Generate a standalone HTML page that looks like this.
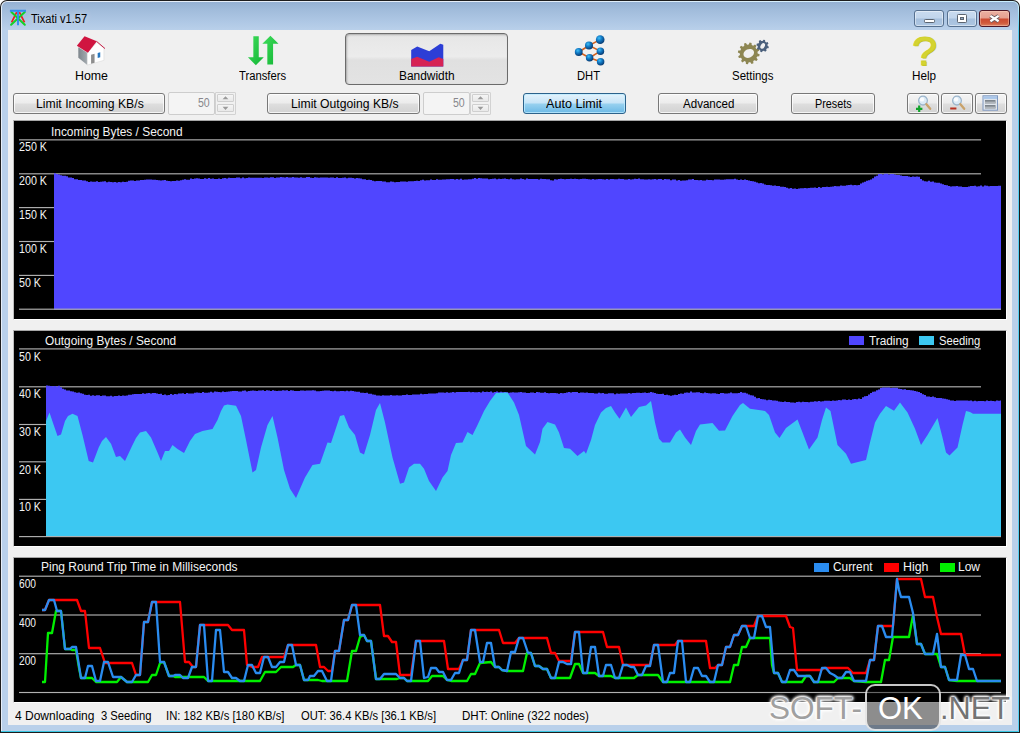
<!DOCTYPE html>
<html lang="en"><head><meta charset="utf-8"><title>Tixati v1.57</title>
<style>
html,body{margin:0;padding:0;background:#fff;}
body{width:1020px;height:733px;overflow:hidden;position:relative;font-family:"Liberation Sans",sans-serif;font-size:12px;line-height:14px;color:#000;}
div,span,svg{position:absolute;box-sizing:border-box;}
.t{white-space:nowrap;line-height:14px;height:14px;transform-origin:0 0;display:block;}
#win{left:0;top:0;width:1020px;height:733px;background:#1d1d1d;border-radius:7px 7px 0 0;overflow:hidden;}
#hi{left:1px;top:1px;width:1018px;height:731px;background:linear-gradient(90deg,#e6eef8 0,#e6eef8 50%,#c9efff 100%);border-radius:6px 6px 0 0;}
#glass{left:2px;top:2px;width:1016px;height:729px;border-radius:5px 5px 0 0;background:linear-gradient(180deg,#95b1d3 0,#a1bcdb 8px,#afc8e5 20px,#b9d0ea 28px,#b9d0ea 100%);}
#rline{left:1018px;top:6px;width:1px;height:726px;background:linear-gradient(180deg,rgba(84,208,242,0) 0,#56d0f2 24px,#56d0f2 100%);}
#botline{left:1px;top:731px;width:1018px;height:1px;background:#38c6e2;}
#client{left:8px;top:30px;width:1004px;height:695px;background:#f0f0f0;}
.cap{top:10px;height:17px;border:1px solid #56708f;border-radius:3px;background:linear-gradient(180deg,#c9dbef 0,#c1d5ec 48%,#a6c0dd 52%,#adc6e2 100%);box-shadow:inset 0 0 0 1px rgba(255,255,255,.45);}
#bclose{border-color:#4d1626;background:linear-gradient(180deg,#ebb0a2 0,#e59f8f 48%,#cc4a31 52%,#d05a3c 80%,#dd8263 100%);box-shadow:inset 0 0 0 1px rgba(255,220,200,.4);}
.btn{height:21px;top:93px;border:1px solid #787878;border-radius:3px;background:linear-gradient(180deg,#f4f4f4 0,#ececec 48%,#dedede 52%,#d2d2d2 100%);box-shadow:inset 0 0 0 1px rgba(255,255,255,.75);}
.btn.hot{border-color:#2c628b;background:linear-gradient(180deg,#e4f3fc 0,#c6e4f7 48%,#98d1ef 52%,#6bb9e6 100%);box-shadow:inset 0 0 0 1px rgba(190,235,255,.8);}
.edit{top:92px;height:23px;width:47px;border:1px solid #cdcdcd;background:#f4f4f4;border-radius:2px;}
.spinf{top:92px;height:23px;width:21px;border:1px solid #d2d2d2;background:#f1f1f1;border-radius:1px;}
.spin{width:17px;height:8px;border:1px solid #cfcfcf;border-radius:1px;background:linear-gradient(180deg,#f5f5f5,#e9e9e9);}
.panel{left:13px;width:994px;background:#000;border-top:1px solid #a6a6a6;border-left:1px solid #bcbcbc;border-right:1px solid #fff;border-bottom:1px solid #fff;}
#tabsel{left:345px;top:33px;width:163px;height:52px;border:1px solid #6b6b6b;border-radius:4px;background:linear-gradient(180deg,#e6e6e6 0,#ececec 45%,#e0e0e0 52%,#e3e3e3 100%);box-shadow:inset 1px 1px 2px rgba(0,0,0,.25);}
.sw{width:15px;height:9px;}
.wm{font-family:"Liberation Sans",sans-serif;font-size:31px;line-height:31px;white-space:nowrap;color:#a0a0a0;text-shadow:0 0 2px #fff,0 0 2px #fff,0 0 3px #fff,0 0 3px #fff,0 0 4px #fff,0 0 4px rgba(255,255,255,.9);transform-origin:0 0;}
</style></head>
<body>
<div id="win"><div id="hi"></div><div id="glass"></div><div id="botline"></div><div id="rline"></div>
<svg id="appicon" style="left:9px;top:9px" width="19" height="18" viewBox="0 0 19 18"><path d="M7.7 3.2 L2.6 13.4 M10.4 3.2 L15.5 13.4" stroke="#ee1c1c" stroke-width="1.7" fill="none"/><path d="M2.4 3 L15.8 15.8 M15.8 3 L2.1 15.8" stroke="#14d028" stroke-width="2" fill="none" stroke-linecap="round"/><path d="M0.9 1.8 H17 M9 2 V16.3" stroke="#2f8cf0" stroke-width="1.9" fill="none"/></svg>
<span class="t" style="left:31.00px;top:12px;font-size:12px;color:#000;transform:scaleX(0.920);text-shadow:0 0 7px rgba(255,255,255,.55),0 0 10px rgba(255,255,255,.4);">Tixati v1.57</span>
<div class="cap" style="left:914px;width:30px"><svg style="left:0;top:0" width="28" height="15" viewBox="0 0 28 15"><rect x="9.5" y="8.5" width="10" height="3" rx="0.8" fill="#fff" stroke="#5b6470" stroke-width="1"/></svg></div>
<div class="cap" style="left:947px;width:30px"><svg style="left:0;top:0" width="28" height="15" viewBox="0 0 28 15"><rect x="9.5" y="3.5" width="9" height="8" rx="0.8" fill="#fff" stroke="#5b6470" stroke-width="1"/><rect x="12.5" y="6.5" width="3" height="2" fill="#8fa6c2" stroke="#5b6470" stroke-width="1"/></svg></div>
<div class="cap" id="bclose" style="left:979px;width:31px"><svg style="left:0;top:0" width="29" height="15" viewBox="0 0 29 15"><path d="M10.4 4.9 L18.6 10.3 M18.6 4.9 L10.4 10.3" stroke="#6a5a5e" stroke-width="4" fill="none"/><path d="M10.4 4.9 L18.6 10.3 M18.6 4.9 L10.4 10.3" stroke="#fff" stroke-width="2.3" fill="none"/></svg></div>
<div id="client"></div>
<div id="tabsel"></div>
<svg id="tabicons" style="left:0;top:0" width="1020" height="90" viewBox="0 0 1020 90"><defs><radialGradient id="ball" cx="0.38" cy="0.32" r="0.7"><stop offset="0" stop-color="#3fc0f8"/><stop offset="0.45" stop-color="#1279c4"/><stop offset="1" stop-color="#06386f"/></radialGradient><linearGradient id="garrow" x1="0" y1="0" x2="1" y2="1"><stop offset="0" stop-color="#3fdd5c"/><stop offset="1" stop-color="#12b534"/></linearGradient><linearGradient id="wall" x1="0" y1="0" x2="1" y2="0"><stop offset="0" stop-color="#7e868c"/><stop offset="1" stop-color="#a4abb0"/></linearGradient></defs><polygon points="78.33,47.17 87.33,52.83 87.33,65.08 78.33,57.83" fill="url(#wall)" /><polygon points="87.33,52.83 96.83,42.33 103.92,48.42 103.92,60.33 87.33,65.08" fill="#ffffff" stroke="#dcdcdc" stroke-width="0.6"/><polygon points="76.83,45.67 84.58,36.17 96.83,41.17 87.92,52.67" fill="#d01540" /><path d="M96.50 41.33 L105.00 48.58" stroke="#c82048" stroke-width="1" fill="none"/><polygon points="91.08,54.83 94.58,53.83 94.58,62.67 91.08,63.83" fill="#8e8e8e" /><polygon points="97.67,53.00 100.25,52.25 100.25,57.33 97.67,58.08" fill="#2878c0" /><polygon points="253.33,36.17 258.75,36.17 258.75,57.17 263.75,57.17 255.83,65.17 247.92,57.17 253.33,57.17" fill="url(#garrow)" /><polygon points="270.42,35.83 278.50,43.83 273.08,43.83 273.08,64.50 267.33,64.50 267.33,43.83 262.33,43.83" fill="url(#garrow)" /><polygon points="411.20,49.96 417.21,46.53 429.22,51.33 440.37,43.78 443.28,44.64 443.28,66.60 411.20,66.60" fill="#2c3ed6" /><polygon points="411.20,59.05 417.21,56.65 429.22,61.63 438.65,57.34 443.28,59.05 443.28,66.60 411.20,66.60" fill="#d62254" /><line x1="578.75" y1="52.00" x2="589.00" y2="45.50" stroke="#d2601e" stroke-width="1.5"/><line x1="589.00" y1="45.50" x2="600.17" y2="39.67" stroke="#d2601e" stroke-width="1.5"/><line x1="589.00" y1="45.50" x2="600.42" y2="51.17" stroke="#d2601e" stroke-width="1.5"/><line x1="578.75" y1="52.00" x2="589.58" y2="57.75" stroke="#d2601e" stroke-width="1.5"/><line x1="589.58" y1="57.75" x2="600.42" y2="51.17" stroke="#d2601e" stroke-width="1.5"/><line x1="589.58" y1="57.75" x2="600.58" y2="61.75" stroke="#d2601e" stroke-width="1.5"/><circle cx="578.75" cy="52.00" r="3.92" fill="url(#ball)"/><circle cx="589.00" cy="45.50" r="4.00" fill="url(#ball)"/><circle cx="600.17" cy="39.67" r="4.33" fill="url(#ball)"/><circle cx="600.42" cy="51.17" r="3.75" fill="url(#ball)"/><circle cx="589.58" cy="57.75" r="3.75" fill="url(#ball)"/><circle cx="600.58" cy="61.75" r="3.75" fill="url(#ball)"/><path d="M757.65 53.42 L759.62 54.27 L759.28 56.24 L757.14 56.39 L756.46 57.87 L757.73 59.59 L756.46 61.12 L754.53 60.18 L753.20 61.12 L753.44 63.25 L751.57 63.95 L750.37 62.17 L748.75 62.32 L747.89 64.28 L745.93 63.95 L745.78 61.81 L744.30 61.12 L742.58 62.40 L741.04 61.12 L741.98 59.20 L741.04 57.87 L738.91 58.11 L738.22 56.24 L740.00 55.04 L739.85 53.42 L737.88 52.56 L738.22 50.60 L740.36 50.45 L741.04 48.97 L739.77 47.24 L741.04 45.71 L742.97 46.65 L744.30 45.71 L744.06 43.58 L745.93 42.89 L747.13 44.67 L748.75 44.52 L749.61 42.55 L751.57 42.89 L751.72 45.03 L753.20 45.71 L754.92 44.43 L756.46 45.71 L755.52 47.64 L756.46 48.97 L758.59 48.72 L759.28 50.60 L757.50 51.79 Z M743.77 55.74 a5.50 4.20 -25 1 0 9.97 -4.65 a5.50 4.20 -25 1 0 -9.97 4.65 Z" fill="#8d8652" fill-rule="evenodd"/><path d="M767.67 45.92 L768.92 46.66 L768.49 48.33 L767.03 48.36 L766.20 49.45 L766.57 50.86 L765.08 51.74 L764.02 50.73 L762.67 50.92 L761.93 52.17 L760.26 51.74 L760.22 50.28 L759.13 49.45 L757.72 49.82 L756.85 48.33 L757.85 47.27 L757.67 45.92 L756.41 45.18 L756.85 43.51 L758.30 43.47 L759.13 42.38 L758.77 40.97 L760.26 40.10 L761.31 41.10 L762.67 40.92 L763.41 39.66 L765.08 40.10 L765.11 41.55 L766.20 42.38 L767.61 42.02 L768.49 43.51 L767.48 44.56 Z M761.12 48.60 a3.10 2.00 -60 1 0 3.10 -5.37 a3.10 2.00 -60 1 0 -3.10 5.37 Z" fill="#4b607c" fill-rule="evenodd"/></svg>
<span class="t" id="helpq" style="left:912px;top:29px;font-size:40.5px;line-height:44px;height:44px;color:#d4d432;-webkit-text-stroke:0.9px #d0d02c;transform:scaleX(1.12);text-shadow:0.7px 0.7px 0 #bcbc22">?</span>
<span class="t" style="left:75.00px;top:69px;font-size:12px;color:#000;transform:scaleX(1.031);">Home</span>
<span class="t" style="left:238.70px;top:69px;font-size:12px;color:#000;transform:scaleX(0.938);">Transfers</span>
<span class="t" style="left:399.00px;top:69px;font-size:12px;color:#000;transform:scaleX(0.993);">Bandwidth</span>
<span class="t" style="left:577.00px;top:69px;font-size:12px;color:#000;transform:scaleX(0.931);">DHT</span>
<span class="t" style="left:731.50px;top:69px;font-size:12px;color:#000;transform:scaleX(0.956);">Settings</span>
<span class="t" style="left:911.70px;top:69px;font-size:12px;color:#000;transform:scaleX(0.976);">Help</span>
<div class="btn" style="left:13px;width:152px"></div>
<span class="t" style="left:36.00px;top:97px;font-size:12px;color:#000;transform:scaleX(1.016);">Limit Incoming KB/s</span>
<div class="btn" style="left:267px;width:153px"></div>
<span class="t" style="left:291.00px;top:97px;font-size:12px;color:#000;transform:scaleX(1.015);">Limit Outgoing KB/s</span>
<div class="btn hot" style="left:523px;width:103px"></div>
<span class="t" style="left:546.00px;top:97px;font-size:12px;color:#000;transform:scaleX(1.049);">Auto Limit</span>
<div class="btn" style="left:658px;width:100px"></div>
<span class="t" style="left:682.50px;top:97px;font-size:12px;color:#000;transform:scaleX(0.964);">Advanced</span>
<div class="btn" style="left:791px;width:84px"></div>
<span class="t" style="left:815.00px;top:97px;font-size:12px;color:#000;transform:scaleX(0.902);">Presets</span>
<div class="edit" style="left:168px"></div>
<span class="t" style="left:198.00px;top:96px;font-size:12px;color:#87878c;transform:scaleX(0.880);">50</span>
<div class="spinf" style="left:215px"></div>
<div class="spin" style="left:217px;top:94px"></div><div class="spin" style="left:217px;top:104px"></div>
<svg style="left:215px;top:92px" width="21" height="22" viewBox="0 0 21 22"><path d="M7.6 7.3 L10.5 4.2 L13.4 7.3 Z M7.6 14.8 L10.5 17.9 L13.4 14.8 Z" fill="#9a9a9a"/></svg>
<div class="edit" style="left:423px"></div>
<span class="t" style="left:453.20px;top:96px;font-size:12px;color:#87878c;transform:scaleX(0.880);">50</span>
<div class="spinf" style="left:470px"></div>
<div class="spin" style="left:472px;top:94px"></div><div class="spin" style="left:472px;top:104px"></div>
<svg style="left:470px;top:92px" width="21" height="22" viewBox="0 0 21 22"><path d="M7.6 7.3 L10.5 4.2 L13.4 7.3 Z M7.6 14.8 L10.5 17.9 L13.4 14.8 Z" fill="#9a9a9a"/></svg>
<div class="btn" style="left:907px;width:32px"></div>
<div class="btn" style="left:941px;width:32px"></div>
<div class="btn" style="left:975px;width:32px"></div>
<svg style="left:907px;top:92px" width="100" height="22" viewBox="0 0 100 22"><g transform="translate(16,8.6)"><circle cx="0" cy="0" r="4.4" fill="#dbeaf6" stroke="#9db6cc" stroke-width="1.3"/><circle cx="-1" cy="-1.2" r="2.2" fill="#fff" opacity=".85"/><path d="M3.4 3.6 L7.2 8.2" stroke="#c9a26a" stroke-width="2.3" stroke-linecap="round"/></g><path d="M9 16.8 h6.4 M12.2 13.6 v6.4" stroke="#12a42c" stroke-width="2.2"/><g transform="translate(50,8.6)"><circle cx="0" cy="0" r="4.4" fill="#dbeaf6" stroke="#9db6cc" stroke-width="1.3"/><circle cx="-1" cy="-1.2" r="2.2" fill="#fff" opacity=".85"/><path d="M3.4 3.6 L7.2 8.2" stroke="#c9a26a" stroke-width="2.3" stroke-linecap="round"/></g><path d="M43.2 16.6 h6.2" stroke="#b83020" stroke-width="2"/><rect x="76" y="3.8" width="14.5" height="14.4" fill="#dfe5ec" stroke="#7f98c0" stroke-width="1"/><rect x="76.5" y="4.3" width="13.5" height="2.6" fill="#a9c6ea"/><rect x="78" y="8" width="10.5" height="3.4" fill="#7d858d"/><rect x="78" y="9.6" width="10.5" height="1.8" fill="#aeb4ba"/><rect x="78" y="13" width="10.5" height="3.4" fill="#7d858d"/><rect x="78" y="14.6" width="10.5" height="1.8" fill="#aeb4ba"/></svg>
<div class="panel" style="top:120px;height:200px"></div>
<div class="panel" style="top:330px;height:217px"></div>
<div class="panel" style="top:557px;height:146px"></div>
<svg id="charts" style="left:0;top:0" width="1020" height="733" viewBox="0 0 1020 733"><rect x="19" y="139.28" width="962" height="1.15" fill="#b0b0b0"/><rect x="19" y="173.23" width="962" height="1.15" fill="#b0b0b0"/><rect x="19" y="207.03" width="962" height="1.15" fill="#b0b0b0"/><rect x="19" y="240.93" width="962" height="1.15" fill="#b0b0b0"/><rect x="19" y="274.83" width="962" height="1.15" fill="#b0b0b0"/><rect x="19" y="348.33" width="962" height="1.15" fill="#b0b0b0"/><rect x="19" y="386.23" width="962" height="1.15" fill="#b0b0b0"/><rect x="19" y="423.93" width="962" height="1.15" fill="#b0b0b0"/><rect x="19" y="461.23" width="962" height="1.15" fill="#b0b0b0"/><rect x="19" y="498.83" width="962" height="1.15" fill="#b0b0b0"/><rect x="19" y="575.63" width="962" height="1.15" fill="#b0b0b0"/><rect x="19" y="614.43" width="962" height="1.15" fill="#b0b0b0"/><rect x="19" y="653.13" width="962" height="1.15" fill="#b0b0b0"/><rect x="19" y="691.93" width="982" height="1.15" fill="#b0b0b0"/><polygon fill="#5046ff" points="54,173.2 56,173.2 56,174 58,174 58,174.4 60,174.4 60,175.2 62,175.2 62,175.7 64,175.7 64,175.7 66,175.7 66,176.2 68,176.2 68,177.6 70,177.6 70,177.5 72,177.5 72,178 74,178 74,179.2 76,179.2 76,179.2 78,179.2 78,179.9 80,179.9 80,179.9 82,179.9 82,180.5 84,180.5 84,180.4 86,180.4 86,181.2 88,181.2 88,181.9 90,181.9 90,181.6 92,181.6 92,181.8 94,181.8 94,181.8 96,181.8 96,181.2 98,181.2 98,181.9 100,181.9 100,181.8 102,181.8 102,181.5 104,181.5 104,181.3 106,181.3 106,182.2 108,182.2 108,181.8 110,181.8 110,182.1 112,182.1 112,182.3 114,182.3 114,182.1 116,182.1 116,182.4 118,182.4 118,181.9 120,181.9 120,182.3 122,182.3 122,181.7 124,181.7 124,182 126,182 126,181.8 128,181.8 128,180.8 130,180.8 130,180.6 132,180.6 132,180.5 134,180.5 134,181.1 136,181.1 136,180.4 138,180.4 138,180.4 140,180.4 140,179.9 142,179.9 142,179.9 144,179.9 144,179.7 146,179.7 146,179.5 148,179.5 148,179.5 150,179.5 150,179.4 152,179.4 152,179.8 154,179.8 154,179.8 156,179.8 156,180.1 158,180.1 158,180.2 160,180.2 160,180.5 162,180.5 162,180.3 164,180.3 164,180 166,180 166,180.8 168,180.8 168,181.1 170,181.1 170,181.2 172,181.2 172,181 174,181 174,181.1 176,181.1 176,180.4 178,180.4 178,180.8 180,180.8 180,180.3 182,180.3 182,179.8 184,179.8 184,179.3 186,179.3 186,179.8 188,179.8 188,179.7 190,179.7 190,178.6 192,178.6 192,179 194,179 194,178.6 196,178.6 196,178.3 198,178.3 198,178.5 200,178.5 200,178.9 202,178.9 202,179 204,179 204,178.2 206,178.2 206,178.7 208,178.7 208,178.1 210,178.1 210,178.8 212,178.8 212,178.4 214,178.4 214,178.9 216,178.9 216,179 218,179 218,178.5 220,178.5 220,179 222,179 222,178.2 224,178.2 224,177.9 226,177.9 226,178.4 228,178.4 228,177.8 230,177.8 230,177.9 232,177.9 232,178 234,178 234,178.1 236,178.1 236,177.6 238,177.6 238,177.4 240,177.4 240,178.2 242,178.2 242,177.6 244,177.6 244,178.2 246,178.2 246,178.1 248,178.1 248,177.6 250,177.6 250,177.7 252,177.7 252,177.7 254,177.7 254,177.8 256,177.8 256,177.7 258,177.7 258,177.7 260,177.7 260,177.7 262,177.7 262,178 264,178 264,177.6 266,177.6 266,177.5 268,177.5 268,177.7 270,177.7 270,177.2 272,177.2 272,177.3 274,177.3 274,177.9 276,177.9 276,177.5 278,177.5 278,177.5 280,177.5 280,176.9 282,176.9 282,177.3 284,177.3 284,177.5 286,177.5 286,177 288,177 288,177.6 290,177.6 290,177.6 292,177.6 292,177 294,177 294,177.6 296,177.6 296,177.4 298,177.4 298,177.7 300,177.7 300,177.3 302,177.3 302,177.7 304,177.7 304,177.7 306,177.7 306,177 308,177 308,177.1 310,177.1 310,177.7 312,177.7 312,178 314,178 314,177.3 316,177.3 316,177.5 318,177.5 318,177.7 320,177.7 320,177.4 322,177.4 322,177.5 324,177.5 324,177.4 326,177.4 326,177.5 328,177.5 328,177.8 330,177.8 330,177.5 332,177.5 332,177.6 334,177.6 334,178 336,178 336,177.3 338,177.3 338,177.9 340,177.9 340,178.1 342,178.1 342,177.7 344,177.7 344,177.6 346,177.6 346,178.2 348,178.2 348,177.7 350,177.7 350,177.7 352,177.7 352,178.1 354,178.1 354,178.4 356,178.4 356,178 358,178 358,178.3 360,178.3 360,178.4 362,178.4 362,179.3 364,179.3 364,179.2 366,179.2 366,180 368,180 368,179.7 370,179.7 370,180.1 372,180.1 372,180.7 374,180.7 374,181.2 376,181.2 376,181 378,181 378,181 380,181 380,181 382,181 382,181.6 384,181.6 384,181.4 386,181.4 386,182.2 388,182.2 388,182.3 390,182.3 390,181.6 392,181.6 392,181.7 394,181.7 394,182.2 396,182.2 396,182 398,182 398,182.1 400,182.1 400,181.6 402,181.6 402,181.4 404,181.4 404,181.4 406,181.4 406,181.8 408,181.8 408,181.2 410,181.2 410,181.2 412,181.2 412,181.2 414,181.2 414,181 416,181 416,180.8 418,180.8 418,181.1 420,181.1 420,180.2 422,180.2 422,179.8 424,179.8 424,180.5 426,180.5 426,180.2 428,180.2 428,180.2 430,180.2 430,179.6 432,179.6 432,180.1 434,180.1 434,180 436,180 436,179.3 438,179.3 438,179.8 440,179.8 440,179.8 442,179.8 442,179.6 444,179.6 444,179.4 446,179.4 446,179.2 448,179.2 448,179.2 450,179.2 450,179 452,179 452,178.9 454,178.9 454,179.4 456,179.4 456,179.1 458,179.1 458,179.6 460,179.6 460,178.8 462,178.8 462,179.7 464,179.7 464,179.4 466,179.4 466,179.5 468,179.5 468,179.3 470,179.3 470,179.2 472,179.2 472,178.8 474,178.8 474,178.1 476,178.1 476,178.7 478,178.7 478,178 480,178 480,178.2 482,178.2 482,178.6 484,178.6 484,178.6 486,178.6 486,178.5 488,178.5 488,179.2 490,179.2 490,178.9 492,178.9 492,178.7 494,178.7 494,178.6 496,178.6 496,179.2 498,179.2 498,178.8 500,178.8 500,179.1 502,179.1 502,178.7 504,178.7 504,178.6 506,178.6 506,178.9 508,178.9 508,179.2 510,179.2 510,178.6 512,178.6 512,179.2 514,179.2 514,179.4 516,179.4 516,179.3 518,179.3 518,179.3 520,179.3 520,178.5 522,178.5 522,179.1 524,179.1 524,179.4 526,179.4 526,178.6 528,178.6 528,178.9 530,178.9 530,178.9 532,178.9 532,179.1 534,179.1 534,179.1 536,179.1 536,179.1 538,179.1 538,179.5 540,179.5 540,178.7 542,178.7 542,178.9 544,178.9 544,179.1 546,179.1 546,179.2 548,179.2 548,179.3 550,179.3 550,180.3 552,180.3 552,180.4 554,180.4 554,179.3 556,179.3 556,179.5 558,179.5 558,179.1 560,179.1 560,178.8 562,178.8 562,178.9 564,178.9 564,179.2 566,179.2 566,179.1 568,179.1 568,178.9 570,178.9 570,178.7 572,178.7 572,178.9 574,178.9 574,178.7 576,178.7 576,179.1 578,179.1 578,179.3 580,179.3 580,179 582,179 582,178.7 584,178.7 584,178.8 586,178.8 586,179 588,179 588,179.2 590,179.2 590,179.4 592,179.4 592,179 594,179 594,179.5 596,179.5 596,179.3 598,179.3 598,179.1 600,179.1 600,179.1 602,179.1 602,179.2 604,179.2 604,179.4 606,179.4 606,179.1 608,179.1 608,179.4 610,179.4 610,179.1 612,179.1 612,178.9 614,178.9 614,179.2 616,179.2 616,179.3 618,179.3 618,178.7 620,178.7 620,179 622,179 622,179 624,179 624,179.5 626,179.5 626,179.5 628,179.5 628,178.9 630,178.9 630,179.4 632,179.4 632,179.3 634,179.3 634,178.8 636,178.8 636,179 638,179 638,178.6 640,178.6 640,179.3 642,179.3 642,179.2 644,179.2 644,179.5 646,179.5 646,179.4 648,179.4 648,179.3 650,179.3 650,179.4 652,179.4 652,179.3 654,179.3 654,178.9 656,178.9 656,179.4 658,179.4 658,178.9 660,178.9 660,179 662,179 662,179.7 664,179.7 664,179 666,179 666,179.2 668,179.2 668,179.3 670,179.3 670,180.2 672,180.2 672,179.6 674,179.6 674,179.6 676,179.6 676,180.6 678,180.6 678,180 680,180 680,180.8 682,180.8 682,180.4 684,180.4 684,180.4 686,180.4 686,180.2 688,180.2 688,179.6 690,179.6 690,179.6 692,179.6 692,179 694,179 694,180 696,180 696,179.9 698,179.9 698,180.3 700,180.3 700,179.9 702,179.9 702,180.5 704,180.5 704,180.6 706,180.6 706,179.7 708,179.7 708,179.9 710,179.9 710,180 712,180 712,180.2 714,180.2 714,179.6 716,179.6 716,179.4 718,179.4 718,179.5 720,179.5 720,179.7 722,179.7 722,179.8 724,179.8 724,179.4 726,179.4 726,179.3 728,179.3 728,179.3 730,179.3 730,179.2 732,179.2 732,179.2 734,179.2 734,178.8 736,178.8 736,179.4 738,179.4 738,180 740,180 740,179.5 742,179.5 742,180 744,180 744,179.5 746,179.5 746,180.1 748,180.1 748,180.5 750,180.5 750,181 752,181 752,181.3 754,181.3 754,181.8 756,181.8 756,182.5 758,182.5 758,183.3 760,183.3 760,183.1 762,183.1 762,183.5 764,183.5 764,184.6 766,184.6 766,185.1 768,185.1 768,185 770,185 770,185.2 772,185.2 772,185.7 774,185.7 774,185.5 776,185.5 776,185.9 778,185.9 778,186.1 780,186.1 780,186.8 782,186.8 782,186.8 784,186.8 784,187.1 786,187.1 786,187.8 788,187.8 788,188.4 790,188.4 790,188 792,188 792,188.7 794,188.7 794,188.6 796,188.6 796,189 798,189 798,188.6 800,188.6 800,188.3 802,188.3 802,188.2 804,188.2 804,187.9 806,187.9 806,188.3 808,188.3 808,188.1 810,188.1 810,187.7 812,187.7 812,187.8 814,187.8 814,187.6 816,187.6 816,187.9 818,187.9 818,187.1 820,187.1 820,187.7 822,187.7 822,187.1 824,187.1 824,187 826,187 826,186.7 828,186.7 828,187 830,187 830,186.8 832,186.8 832,186.4 834,186.4 834,186.1 836,186.1 836,186.2 838,186.2 838,186.2 840,186.2 840,185.6 842,185.6 842,185.8 844,185.8 844,185.8 846,185.8 846,185.2 848,185.2 848,184.9 850,184.9 850,184.8 852,184.8 852,185.2 854,185.2 854,185.1 856,185.1 856,185.2 858,185.2 858,185.1 860,185.1 860,183.5 862,183.5 862,182.6 864,182.6 864,181.8 866,181.8 866,180.7 868,180.7 868,180.2 870,180.2 870,179.4 872,179.4 872,178.2 874,178.2 874,176.4 876,176.4 876,175.8 878,175.8 878,174 880,174 880,174.1 882,174.1 882,174.4 884,174.4 884,173.8 886,173.8 886,173.8 888,173.8 888,174.5 890,174.5 890,174 892,174 892,174.1 894,174.1 894,174.5 896,174.5 896,175.1 898,175.1 898,174.9 900,174.9 900,175.6 902,175.6 902,175.9 904,175.9 904,176.1 906,176.1 906,175.9 908,175.9 908,176.4 910,176.4 910,176.9 912,176.9 912,176.5 914,176.5 914,176.8 916,176.8 916,176.5 918,176.5 918,176.8 920,176.8 920,179.1 922,179.1 922,180.4 924,180.4 924,181.3 926,181.3 926,181.5 928,181.5 928,180.8 930,180.8 930,181.7 932,181.7 932,181.6 934,181.6 934,182.4 936,182.4 936,182.8 938,182.8 938,182.7 940,182.7 940,183.5 942,183.5 942,184.2 944,184.2 944,185 946,185 946,185.2 948,185.2 948,186.1 950,186.1 950,186.4 952,186.4 952,186.3 954,186.3 954,186.3 956,186.3 956,186 958,186 958,186.5 960,186.5 960,186.4 962,186.4 962,186.9 964,186.9 964,187 966,187 966,187 968,187 968,186.4 970,186.4 970,186.1 972,186.1 972,186.1 974,186.1 974,185.7 976,185.7 976,186.4 978,186.4 978,186.2 980,186.2 980,185.6 982,185.6 982,186.4 984,186.4 984,185.6 986,185.6 986,185.8 988,185.8 988,186.2 990,186.2 990,186.1 992,186.1 992,186.1 994,186.1 994,186.1 996,186.1 996,186 998,186 998,185.8 1000,185.8 1000,185.7 1001,185.7 1001,309.7 54,309.7"/><polygon fill="#5046ff" points="46,385.6 48,385.6 48,385.8 50,385.8 50,386 52,386 52,386.2 54,386.2 54,386.1 56,386.1 56,386.4 58,386.4 58,385.8 60,385.8 60,387.3 62,387.3 62,388.8 64,388.8 64,389.6 66,389.6 66,390.6 68,390.6 68,390.4 70,390.4 70,391.2 72,391.2 72,391.5 74,391.5 74,392.3 76,392.3 76,392.8 78,392.8 78,392.6 80,392.6 80,393.2 82,393.2 82,393.7 84,393.7 84,394.7 86,394.7 86,395 88,395 88,394.8 90,394.8 90,395.8 92,395.8 92,395.2 94,395.2 94,395.7 96,395.7 96,395.3 98,395.3 98,395.2 100,395.2 100,396.1 102,396.1 102,395.5 104,395.5 104,395.5 106,395.5 106,396.3 108,396.3 108,396.2 110,396.2 110,395.7 112,395.7 112,396.4 114,396.4 114,396 116,396 116,396.1 118,396.1 118,395.5 120,395.5 120,396 122,396 122,395.6 124,395.6 124,395.7 126,395.7 126,395.5 128,395.5 128,394.8 130,394.8 130,394.7 132,394.7 132,394.3 134,394.3 134,394.1 136,394.1 136,393.9 138,393.9 138,394 140,394 140,394.1 142,394.1 142,393.3 144,393.3 144,393.8 146,393.8 146,393.3 148,393.3 148,393.1 150,393.1 150,393.5 152,393.5 152,393 154,393 154,393.1 156,393.1 156,393.6 158,393.6 158,394.1 160,394.1 160,393.8 162,393.8 162,395 164,395 164,394.4 166,394.4 166,395.2 168,395.2 168,395.1 170,395.1 170,394.1 172,394.1 172,394.7 174,394.7 174,394.1 176,394.1 176,394.2 178,394.2 178,393.5 180,393.5 180,393.4 182,393.4 182,393.3 184,393.3 184,393.9 186,393.9 186,393 188,393 188,393.4 190,393.4 190,393.4 192,393.4 192,393.4 194,393.4 194,392.7 196,392.7 196,392.6 198,392.6 198,392.7 200,392.7 200,392.9 202,392.9 202,392.1 204,392.1 204,392.7 206,392.7 206,392.7 208,392.7 208,392.6 210,392.6 210,391.7 212,391.7 212,392.6 214,392.6 214,391.6 216,391.6 216,391.8 218,391.8 218,392 220,392 220,392.2 222,392.2 222,391.6 224,391.6 224,392.1 226,392.1 226,391.7 228,391.7 228,391.4 230,391.4 230,391.3 232,391.3 232,391.1 234,391.1 234,390.9 236,390.9 236,390.9 238,390.9 238,391.4 240,391.4 240,391.6 242,391.6 242,390.7 244,390.7 244,390.5 246,390.5 246,391.4 248,391.4 248,390.9 250,390.9 250,390.7 252,390.7 252,390.4 254,390.4 254,390.8 256,390.8 256,391 258,391 258,390.6 260,390.6 260,390.6 262,390.6 262,390.2 264,390.2 264,391 266,391 266,390.2 268,390.2 268,390.6 270,390.6 270,390.9 272,390.9 272,390.2 274,390.2 274,390.8 276,390.8 276,391 278,391 278,390.7 280,390.7 280,390.8 282,390.8 282,390.2 284,390.2 284,390.5 286,390.5 286,390.2 288,390.2 288,390.9 290,390.9 290,390.3 292,390.3 292,390.5 294,390.5 294,391 296,391 296,390.9 298,390.9 298,391 300,391 300,390.5 302,390.5 302,390.6 304,390.6 304,390.8 306,390.8 306,390.6 308,390.6 308,390.4 310,390.4 310,390.6 312,390.6 312,390.3 314,390.3 314,390.6 316,390.6 316,391.2 318,391.2 318,391.2 320,391.2 320,390.9 322,390.9 322,390.8 324,390.8 324,390.6 326,390.6 326,390.4 328,390.4 328,390.6 330,390.6 330,391.1 332,391.1 332,391.2 334,391.2 334,390.7 336,390.7 336,391.2 338,391.2 338,391.2 340,391.2 340,391.1 342,391.1 342,391.1 344,391.1 344,391.2 346,391.2 346,390.8 348,390.8 348,391.2 350,391.2 350,390.8 352,390.8 352,391 354,391 354,391.6 356,391.6 356,391.8 358,391.8 358,391.7 360,391.7 360,392.7 362,392.7 362,392.7 364,392.7 364,392.9 366,392.9 366,392.7 368,392.7 368,393.7 370,393.7 370,393.8 372,393.8 372,394.6 374,394.6 374,394.8 376,394.8 376,395.6 378,395.6 378,395.6 380,395.6 380,395.7 382,395.7 382,395.2 384,395.2 384,395.5 386,395.5 386,395.6 388,395.6 388,395.6 390,395.6 390,395.1 392,395.1 392,395.5 394,395.5 394,395.5 396,395.5 396,395.3 398,395.3 398,395.6 400,395.6 400,395.5 402,395.5 402,395 404,395 404,394.9 406,394.9 406,394.5 408,394.5 408,395 410,395 410,395 412,395 412,394.5 414,394.5 414,394.6 416,394.6 416,394.5 418,394.5 418,394.4 420,394.4 420,393.7 422,393.7 422,394.2 424,394.2 424,393.9 426,393.9 426,393.9 428,393.9 428,393.6 430,393.6 430,393.6 432,393.6 432,393.6 434,393.6 434,393.4 436,393.4 436,393.3 438,393.3 438,392.5 440,392.5 440,392.5 442,392.5 442,392.6 444,392.6 444,392.7 446,392.7 446,392.2 448,392.2 448,392.7 450,392.7 450,392.6 452,392.6 452,392 454,392 454,392.4 456,392.4 456,392.1 458,392.1 458,391.9 460,391.9 460,392 462,392 462,392.1 464,392.1 464,392 466,392 466,392 468,392 468,391.8 470,391.8 470,392.2 472,392.2 472,392.1 474,392.1 474,392.3 476,392.3 476,392.2 478,392.2 478,391.9 480,391.9 480,392.5 482,392.5 482,391.6 484,391.6 484,392 486,392 486,391.8 488,391.8 488,391.9 490,391.9 490,391.6 492,391.6 492,392.4 494,392.4 494,391.9 496,391.9 496,391.6 498,391.6 498,392.2 500,392.2 500,391.7 502,391.7 502,392.2 504,392.2 504,392 506,392 506,392.3 508,392.3 508,392.7 510,392.7 510,392.6 512,392.6 512,392.2 514,392.2 514,392.6 516,392.6 516,392.5 518,392.5 518,392.2 520,392.2 520,392 522,392 522,392.5 524,392.5 524,392.5 526,392.5 526,392.9 528,392.9 528,392.9 530,392.9 530,392.6 532,392.6 532,392.4 534,392.4 534,392.9 536,392.9 536,392.1 538,392.1 538,392.2 540,392.2 540,392.7 542,392.7 542,392.8 544,392.8 544,392.3 546,392.3 546,392.9 548,392.9 548,393.3 550,393.3 550,392.9 552,392.9 552,393.1 554,393.1 554,393.1 556,393.1 556,393.3 558,393.3 558,393.8 560,393.8 560,393 562,393 562,393.3 564,393.3 564,393.1 566,393.1 566,392.5 568,392.5 568,392 570,392 570,392.5 572,392.5 572,392.1 574,392.1 574,392.1 576,392.1 576,392.1 578,392.1 578,392.9 580,392.9 580,392.5 582,392.5 582,392.4 584,392.4 584,392.7 586,392.7 586,392.4 588,392.4 588,393 590,393 590,392.9 592,392.9 592,392.9 594,392.9 594,393.4 596,393.4 596,393.5 598,393.5 598,392.7 600,392.7 600,393.3 602,393.3 602,393.1 604,393.1 604,393.8 606,393.8 606,393.7 608,393.7 608,393.3 610,393.3 610,393.3 612,393.3 612,393.3 614,393.3 614,394.2 616,394.2 616,393.5 618,393.5 618,393.7 620,393.7 620,393.5 622,393.5 622,393.6 624,393.6 624,393.5 626,393.5 626,393.6 628,393.6 628,392.9 630,392.9 630,393.4 632,393.4 632,392.9 634,392.9 634,393.1 636,393.1 636,392.8 638,392.8 638,392.7 640,392.7 640,392.9 642,392.9 642,392.7 644,392.7 644,392.6 646,392.6 646,392.9 648,392.9 648,392.7 650,392.7 650,392 652,392 652,392.6 654,392.6 654,393.1 656,393.1 656,393.8 658,393.8 658,394.1 660,394.1 660,394 662,394 662,393.8 664,393.8 664,394.9 666,394.9 666,394.8 668,394.8 668,395.3 670,395.3 670,395.7 672,395.7 672,395.3 674,395.3 674,394.8 676,394.8 676,394.9 678,394.9 678,394 680,394 680,393.6 682,393.6 682,393.7 684,393.7 684,392.7 686,392.7 686,392.5 688,392.5 688,392.7 690,392.7 690,391.6 692,391.6 692,392.5 694,392.5 694,392.5 696,392.5 696,392.3 698,392.3 698,392.3 700,392.3 700,393 702,393 702,393.2 704,393.2 704,392.6 706,392.6 706,393.1 708,393.1 708,393.3 710,393.3 710,393.4 712,393.4 712,393.3 714,393.3 714,393.3 716,393.3 716,393.7 718,393.7 718,393.9 720,393.9 720,393.1 722,393.1 722,393.1 724,393.1 724,393.6 726,393.6 726,393.5 728,393.5 728,393.3 730,393.3 730,392.6 732,392.6 732,393.2 734,393.2 734,393.3 736,393.3 736,393.3 738,393.3 738,392.9 740,392.9 740,392.1 742,392.1 742,392.8 744,392.8 744,392.7 746,392.7 746,393.6 748,393.6 748,394.4 750,394.4 750,395.2 752,395.2 752,395.6 754,395.6 754,396.8 756,396.8 756,398.2 758,398.2 758,397.9 760,397.9 760,398.9 762,398.9 762,399.2 764,399.2 764,399.4 766,399.4 766,400.2 768,400.2 768,399.8 770,399.8 770,400.1 772,400.1 772,400.6 774,400.6 774,400.5 776,400.5 776,400.7 778,400.7 778,401.4 780,401.4 780,401.7 782,401.7 782,402.1 784,402.1 784,401.5 786,401.5 786,402 788,402 788,402.1 790,402.1 790,402.6 792,402.6 792,402.4 794,402.4 794,402.8 796,402.8 796,402.1 798,402.1 798,401.7 800,401.7 800,402.3 802,402.3 802,401.7 804,401.7 804,402.1 806,402.1 806,401.9 808,401.9 808,402.2 810,402.2 810,401.7 812,401.7 812,401.7 814,401.7 814,401.3 816,401.3 816,401.5 818,401.5 818,401.1 820,401.1 820,401.5 822,401.5 822,401.2 824,401.2 824,400.8 826,400.8 826,400.8 828,400.8 828,400.8 830,400.8 830,401 832,401 832,400.4 834,400.4 834,400.8 836,400.8 836,400.6 838,400.6 838,399.9 840,399.9 840,400.3 842,400.3 842,399.6 844,399.6 844,399.5 846,399.5 846,399.9 848,399.9 848,399.4 850,399.4 850,399.9 852,399.9 852,399.3 854,399.3 854,399 856,399 856,399.3 858,399.3 858,398.4 860,398.4 860,398.9 862,398.9 862,397.2 864,397.2 864,396.2 866,396.2 866,396 868,396 868,394.6 870,394.6 870,393 872,393 872,391.8 874,391.8 874,391.5 876,391.5 876,390.2 878,390.2 878,389.5 880,389.5 880,388 882,388 882,387.6 884,387.6 884,387.4 886,387.4 886,387.4 888,387.4 888,387.6 890,387.6 890,387.9 892,387.9 892,387.7 894,387.7 894,387.8 896,387.8 896,387.8 898,387.8 898,388.8 900,388.8 900,388.9 902,388.9 902,389.4 904,389.4 904,389.3 906,389.3 906,390 908,390 908,390 910,390 910,390.3 912,390.3 912,390.6 914,390.6 914,391.1 916,391.1 916,391.4 918,391.4 918,392.1 920,392.1 920,393 922,393 922,394.2 924,394.2 924,395 926,395 926,396.5 928,396.5 928,396.4 930,396.4 930,396.9 932,396.9 932,396.4 934,396.4 934,397.2 936,397.2 936,397.9 938,397.9 938,397.9 940,397.9 940,397.9 942,397.9 942,398.5 944,398.5 944,398.7 946,398.7 946,399.3 948,399.3 948,399.8 950,399.8 950,400.6 952,400.6 952,400.6 954,400.6 954,401.1 956,401.1 956,400.4 958,400.4 958,400.5 960,400.5 960,400.5 962,400.5 962,400.4 964,400.4 964,400.6 966,400.6 966,400.5 968,400.5 968,400.8 970,400.8 970,400.4 972,400.4 972,401.2 974,401.2 974,400.7 976,400.7 976,401.3 978,401.3 978,401.1 980,401.1 980,401 982,401 982,400.9 984,400.9 984,401.3 986,401.3 986,400.5 988,400.5 988,401.1 990,401.1 990,400.7 992,400.7 992,401.1 994,401.1 994,401.2 996,401.2 996,400.6 998,400.6 998,400.7 1000,400.7 1000,400.5 1001,400.5 1001,537.1 46,537.1"/><polygon fill="#3cc8f2" points="46,421 49.5,412.5 53,423 57.5,436 61,434.5 65,421 68,416 72.5,413.7 77.5,416 82.5,435 88.7,461 93,462.5 98.7,447.5 102,441 106,437 111,443.7 116,457 120,456 125,461 132.5,445 136,438 140,432.5 146,431 151,437.5 157.5,452.5 161,461 165,451 169,451 172.5,445 177.5,449 184,453 190,441 195,434 202.5,431 212.5,429 217.5,420 221,411 224,405.5 227.5,404.5 236,405.7 241,416 246,440 252.5,472.5 256,470 261,447.5 267.5,425 272.5,416 277.5,437.5 284,470 290,488.7 296,498 305,477.5 312.5,465 320,463.7 327.5,442.5 331,443 340,416 344,415 349,427.5 355,435 360,452.5 364,454.5 370,435 376,410 380,403 385,422.5 392.5,457.5 400,483.7 404,482.5 409,467.5 414,463.7 420,463.7 424,468.7 429,481 436,491 442.5,477.5 447.5,471 451,455 456,443 462.5,442.5 467.5,432 472.5,435 477.5,425 484,411 490,401 496,393 507.5,392.5 514,402.5 519,415 526,446 535,454.5 540,442 542.5,428.7 547.5,422 555,424.5 559,432.5 564,448 570,448.7 577.5,456 584,451 586,453.7 591,440 595,425 601,412.5 606,408 611,406 615,412.5 619.5,418.7 626,407.5 631,417 639,407 646,405.5 651,401 655,422.5 659,438.7 662.5,442.5 670,442.5 676,432.5 680,429.5 685,437.5 691,445 696,431 700,424.5 712.5,423 719,430.7 725,430.5 732.5,416 740,405 743,403 750,408.7 765,411 769,415 775,432.5 779.5,438 786,428 797.5,419.5 802.5,432.5 809,449.5 817.5,437.5 822,420 826,407.5 830.5,411 837.5,445 846,453.7 851,463.7 866,460 870,442.5 875,422.5 880,413.7 886,406 894,410.7 900,402.5 907.5,412.5 915,428.7 921,445 927.5,435 937.5,418 942.5,437.5 946,452.5 949.5,455.5 957.5,447.5 962.5,425 966,411 970,412 973,413.7 1001,413.7 1001,537.1 46,537.1"/><rect x="19" y="308.63" width="982" height="1.15" fill="#b0b0b0"/><rect x="19" y="536.03" width="982" height="1.15" fill="#b0b0b0"/><polyline fill="none" stroke="#ff0000" stroke-width="2.3" stroke-linejoin="round" points="42,610 45,610 49,600 77,600 81,611 85,611 89,648 100,648 105,663 132,663 136,675 140,675 144,622 148,622 152,602 180,602 185,662 189,662 193,667 196,667 200,625 228,625 232,630 244,630 247,665 252,667 258,667 262,657 284,657 288,645 316,645 320,667 324,667 328,671 332,671 335,651 339,651 344,620 348,620 352,605 380,605 384,636 388,636 392,642 396,642 400,675 411,675 416,641 444,641 448,669 459,669 463,660 467,660 471,630 499,630 503,643 515,643 519,638 547,638 551,653 555,653 559,661 571,661 575,632 603,632 607,647 619,647 623,665 650,665 654,645 675,645 678,641 706,641 710,668 715,668 718,665 722,665 726,647 730,647 734,635 738,635 742,626 754,626 758,616 786,616 790,627 793,628 797,670 821,670 824,668 848,668 853,673 866,673 870,660 874,660 878,626 893,626 897,579 921,579 925,597 933,597 937,617 941,634 961,634 965,655 1001,655"/><polyline fill="none" stroke="#00f000" stroke-width="2.3" stroke-linejoin="round" points="42,682 45,682 48,633 52,633 56,611 61,611 65,649 70,649 72,650 76,650 79,668 81,678 92,678 96,682 117,682 121,677 127,682 148,682 152,675 156,675 160,663 164,662 169,676 173,676 175,677 204,677 208,681 260,681 265,672 276,672 281,667 293,667 296,665 300,665 304,680 318,680 322,681 347,681 352,651 356,651 360,637 364,635 367,641 371,641 376,679 397,679 400,678 404,678 407,681 428,681 432,676 443,676 447,680 451,681 467,681 471,674 475,674 480,663 491,662 495,667 499,667 502,670 507,671 523,671 527,653 531,653 535,666 539,666 543,669 547,669 551,678 570,678 575,664 579,664 583,673 595,673 599,676 611,676 615,678 634,678 638,675 658,675 663,682 730,682 734,665 738,665 742,647 746,647 750,638 770,638 772,665 774,673 778,673 782,682 802,682 806,676 810,676 814,682 834,682 838,678 850,678 854,681 866,682 881,682 885,660 889,660 893,637 909,637 913,615 917,644 921,644 925,654 937,654 941,667 945,667 949,680 957,681 1001,681"/><polyline fill="none" stroke="#2a8cf0" stroke-width="2.3" stroke-linejoin="round" points="42,610 45,610 49,600 54,600 57,611 61,611 65,649 70,649 72,647 76,647 81,678 85,678 88,666 92,666 96,681 100,681 104,662 108,662 113,677 121,677 127,682 132,682 136,675 140,675 144,622 148,622 152,602 156,602 160,662 164,662 169,676 173,676 175,675 180,675 183,678 188,678 192,667 196,667 200,625 204,625 208,681 212,681 216,630 220,630 224,672 228,672 232,678 236,678 240,681 244,681 248,665 252,665 256,673 260,673 264,657 268,657 272,667 276,667 280,662 284,662 288,645 292,645 296,665 300,665 304,680 308,680 310,676 314,676 318,671 322,671 327,681 331,681 335,651 339,651 344,620 348,620 352,605 356,605 360,635 364,635 367,641 371,641 376,679 380,679 384,674 396,674 400,678 404,678 407,681 411,681 416,641 420,641 424,678 428,677 431,668 436,668 439,672 443,672 447,680 451,680 455,673 459,673 463,660 467,660 471,630 475,630 480,662 483,662 487,643 491,643 495,667 499,667 502,670 507,671 511,652 515,652 519,638 523,638 528,653 531,653 535,666 539,666 543,669 547,669 551,678 555,678 559,662 563,662 567,664 571,664 575,632 579,632 583,673 587,673 591,647 595,647 599,676 603,676 606,665 611,665 615,678 619,678 623,665 627,665 631,667 634,667 638,675 642,675 646,666 650,666 654,645 658,645 663,682 667,682 670,673 674,673 678,641 682,641 686,682 690,682 694,668 698,668 702,676 706,676 710,682 714,682 718,665 722,665 726,647 730,647 734,635 738,635 742,626 746,626 750,638 754,638 758,616 762,616 766,627 770,627 774,673 778,673 782,682 786,682 790,670 794,670 798,676 810,676 814,682 818,682 822,668 826,668 830,673 834,675 838,678 842,678 846,672 850,672 854,681 866,681 870,660 874,660 878,626 882,626 886,637 892,637 897,579 899,590 901,597 909,597 913,613 917,644 921,644 925,654 933,654 937,634 941,667 945,667 949,680 957,680 961,655 965,655 969,669 973,669 977,681 1001,681"/></svg>
<span class="t" style="left:50.50px;top:125px;font-size:12px;color:#f4f4f4;transform:scaleX(0.991);">Incoming Bytes / Second</span>
<span class="t" style="left:45.30px;top:334px;font-size:12px;color:#f4f4f4;transform:scaleX(0.988);">Outgoing Bytes / Second</span>
<span class="t" style="left:41.00px;top:560px;font-size:12px;color:#f4f4f4;transform:scaleX(0.999);">Ping Round Trip Time in Milliseconds</span>
<span class="t" style="left:19.00px;top:140px;font-size:12px;color:#f4f4f4;transform:scaleX(0.891);">250 K</span>
<span class="t" style="left:19.00px;top:174px;font-size:12px;color:#f4f4f4;transform:scaleX(0.891);">200 K</span>
<span class="t" style="left:19.00px;top:208px;font-size:12px;color:#f4f4f4;transform:scaleX(0.891);">150 K</span>
<span class="t" style="left:19.00px;top:242px;font-size:12px;color:#f4f4f4;transform:scaleX(0.891);">100 K</span>
<span class="t" style="left:19.00px;top:276px;font-size:12px;color:#f4f4f4;transform:scaleX(0.891);">50 K</span>
<span class="t" style="left:19.00px;top:350px;font-size:12px;color:#f4f4f4;transform:scaleX(0.891);">50 K</span>
<span class="t" style="left:19.00px;top:387px;font-size:12px;color:#f4f4f4;transform:scaleX(0.891);">40 K</span>
<span class="t" style="left:19.00px;top:425px;font-size:12px;color:#f4f4f4;transform:scaleX(0.891);">30 K</span>
<span class="t" style="left:19.00px;top:463px;font-size:12px;color:#f4f4f4;transform:scaleX(0.891);">20 K</span>
<span class="t" style="left:19.00px;top:500px;font-size:12px;color:#f4f4f4;transform:scaleX(0.891);">10 K</span>
<span class="t" style="left:19.00px;top:577px;font-size:12px;color:#f4f4f4;transform:scaleX(0.850);">600</span>
<span class="t" style="left:19.00px;top:616px;font-size:12px;color:#f4f4f4;transform:scaleX(0.850);">400</span>
<span class="t" style="left:19.00px;top:654px;font-size:12px;color:#f4f4f4;transform:scaleX(0.850);">200</span>
<div class="sw" style="left:848.5px;top:336px;background:#5046ff"></div>
<span class="t" style="left:868.60px;top:334px;font-size:12px;color:#f4f4f4;transform:scaleX(0.985);">Trading</span>
<div class="sw" style="left:919px;top:336px;background:#3cc8f2"></div>
<span class="t" style="left:938.60px;top:334px;font-size:12px;color:#f4f4f4;transform:scaleX(0.936);">Seeding</span>
<div class="sw" style="left:813.7px;top:563px;background:#2a8cf0"></div>
<span class="t" style="left:833.00px;top:560px;font-size:12px;color:#f4f4f4;transform:scaleX(0.988);">Current</span>
<div class="sw" style="left:883.7px;top:563px;background:#ff0000"></div>
<span class="t" style="left:902.50px;top:560px;font-size:12px;color:#f4f4f4;transform:scaleX(1.032);">High</span>
<div class="sw" style="left:939.5px;top:563px;background:#00f000"></div>
<span class="t" style="left:958.00px;top:560px;font-size:12px;color:#f4f4f4;transform:scaleX(1.000);">Low</span>
<span class="t" style="left:14.50px;top:709px;font-size:12px;color:#000;transform:scaleX(1.001);">4 Downloading</span>
<span class="t" style="left:100.50px;top:709px;font-size:12px;color:#000;transform:scaleX(0.935);">3 Seeding</span>
<span class="t" style="left:166.00px;top:709px;font-size:12px;color:#000;transform:scaleX(0.940);">IN: 182 KB/s [180 KB/s]</span>
<span class="t" style="left:300.50px;top:709px;font-size:12px;color:#000;transform:scaleX(0.933);">OUT: 36.4 KB/s [36.1 KB/s]</span>
<span class="t" style="left:462.00px;top:709px;font-size:12px;color:#000;transform:scaleX(0.961);">DHT: Online (322 nodes)</span>
<div id="okbox" style="left:865px;top:684px;width:76px;height:47px;border:2.5px solid rgba(255,255,255,.78);border-radius:10px;background:rgba(0,0,0,.41)"></div>
<span class="wm" style="left:769.2px;top:693px;transform:scaleX(1.018)">SOFT-</span>
<span class="wm" style="left:878px;top:693px;text-shadow:none;color:#fff">OK</span>
<span class="wm" style="left:939.8px;top:693px;color:#747474;transform:scaleX(.992)">.NET</span>
</div>
</body></html>
